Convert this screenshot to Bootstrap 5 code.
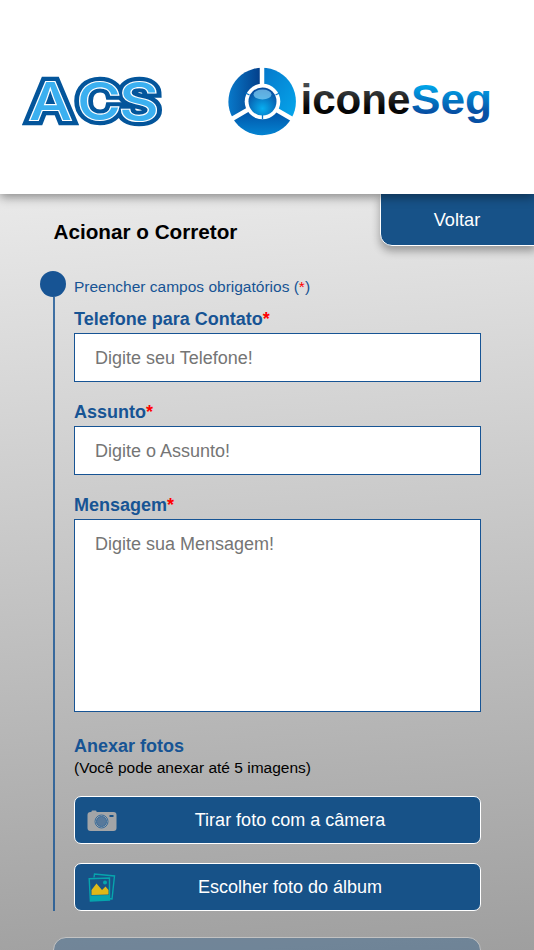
<!DOCTYPE html>
<html lang="pt-BR">
<head>
<meta charset="utf-8">
<meta name="viewport" content="width=device-width, initial-scale=1">
<title>Acionar o Corretor</title>
<link href="https://cdn.jsdelivr.net/npm/bootstrap@5.3.0/dist/css/bootstrap.min.css" rel="stylesheet">
<style>
html,body{height:950px;overflow:hidden}
body{font-family:"Liberation Sans",Arial,sans-serif;color:#000;background:linear-gradient(176deg,#e9e9e9 20%,#9f9f9f 100%)}
.brand-bar{height:194px;background:#fff;box-shadow:0 3px 10px rgba(0,0,0,.42);z-index:2}
.logo-acs{margin-left:20px;margin-top:70px}
.logo-seg{margin-left:56px;margin-top:62px;overflow:visible}
.title-row{height:77px;padding-left:53.5px}
.page-title{font-size:20.7px;font-weight:700;line-height:24px;margin:26px 0 0}
.back-btn{width:156px;height:53px;margin-top:-1px;margin-right:-2px;border:1.5px solid #fff;border-radius:0 0 0 12px;background:#175288;color:#fff;font-size:18.2px;box-shadow:0 5px 9px rgba(0,0,0,.33);padding:2px 2px 0 0}
.back-btn:hover{background:#175288;color:#fff}
.step-rail{width:26px;margin-left:40px;height:640px}
.step-dot{width:26px;height:26px;background:#175494}
.step-line{width:2px;margin-left:2px;background:#175494;opacity:.8}
.form-area{width:407px;margin-left:8px}
.hint{font-size:15.5px;line-height:18px;margin:7px 0 12px;color:#175494}
.field-label{font-size:18px;font-weight:700;line-height:22px;height:25px;color:#175494;margin:0;display:block}
.req{color:#f00}
.field-box{height:49px;border:1.5px solid #175494;font-size:18px;padding:1px 20px 0;line-height:24px;margin-bottom:19px;background:#fff}
.field-box::placeholder{color:#757575}
.field-box.tall{height:193px;padding-top:12px;resize:none;margin-bottom:23px;display:block}
.photo-note{font-size:15.5px;line-height:18px;margin:-1px 0 19px}
.photo-btn{height:48px;background:#175288;border:1.5px solid #fff;border-radius:7px;color:#fff;font-size:18px;margin-bottom:19px;padding:0 0 0 12px}
.photo-btn:hover{background:#175288;color:#fff;border-color:#fff}
.photo-btn .cap{padding-right:17px}
.send-btn{width:428px;height:52px;margin:7px 0 0 53px;border-radius:13px;background:#175288;border:1.5px solid #fff;opacity:.35!important}
.send-btn:disabled{background:#175288;border-color:#fff}
</style>
<script src="https://cdn.jsdelivr.net/npm/bootstrap@5.3.0/dist/js/bootstrap.bundle.min.js"></script>
</head>
<body>
<header class="brand-bar position-relative d-flex align-items-start">
  <svg class="logo-acs" width="150" height="62" viewBox="20 70 150 62" role="img" aria-label="ACS">
    <g stroke-linejoin="miter" stroke-miterlimit="3" font-family="Inter, sans-serif" font-weight="500" font-size="52">
      <g fill="#03559b" stroke="#03559b" stroke-width="10.5"><use href="#acs"/></g>
      <g fill="#fff" stroke="#fff" stroke-width="2.2"><use href="#acs"/></g>
      <g fill="#3bb0f0"><text id="acs" y="119.700"><tspan x="29" textLength="43" lengthAdjust="spacingAndGlyphs">A</tspan><tspan x="77" textLength="44" lengthAdjust="spacingAndGlyphs">C</tspan><tspan x="119" textLength="40" lengthAdjust="spacingAndGlyphs">S</tspan></text></g>
    </g>
  </svg>
  <svg class="logo-seg" width="270" height="80" viewBox="226 62 270 80" role="img" aria-label="iconeSeg">
    <defs>
      <linearGradient id="k" x1="0" y1="84" x2="0" y2="114" gradientUnits="userSpaceOnUse"><stop stop-color="#4a4e50"/><stop offset=".8" stop-color="#050505"/></linearGradient>
      <linearGradient id="b" x1="0" y1="83" x2="0" y2="122" gradientUnits="userSpaceOnUse"><stop stop-color="#00adf0"/><stop offset=".75" stop-color="#0650a4"/></linearGradient>
      <linearGradient id="d1" x1="0" y1="0" x2="1" y2="0"><stop stop-color="#0879ca"/><stop offset="1" stop-color="#033b86"/></linearGradient>
      <linearGradient id="d2" x1="0" y1="0" x2="1" y2="1"><stop stop-color="#0577ca"/><stop offset="1" stop-color="#05a7ec"/></linearGradient>
      <linearGradient id="d3" x1="0" y1="0" x2="0" y2="1"><stop stop-color="#003f96"/><stop offset="1" stop-color="#0484d2"/></linearGradient>
      <radialGradient id="orb" cx=".5" cy=".75" r=".7"><stop stop-color="#08aef0"/><stop offset="1" stop-color="#074da0"/></radialGradient>
    </defs>
    <path fill="url(#d1)" d="M262 101.500V67.700A33.900 33.900 0 0 0 232.900 118.500Z"/>
    <path fill="url(#d2)" d="M262 101.500V67.700A33.900 33.900 0 0 1 291.400 118.500Z"/>
    <path fill="url(#d3)" d="M262 101.500L232.900 118.500A33.900 33.900 0 0 0 291.400 118.500Z"/>
    <path d="M262 101.500V66M262 101.500L231 119.500M262 101.500L293 119.500" stroke="#fff" stroke-width="4.500"/>
    <circle cx="262.500" cy="101.500" r="17.800" fill="#fff"/>
    <circle cx="262.500" cy="101.500" r="14" fill="url(#orb)"/>
    <ellipse cx="262.500" cy="94.500" rx="9" ry="5" fill="#8fd9fb" opacity=".65"/>
    <path d="M262.500 115v4M249.500 95l-4-2M275.500 95l4-2" stroke="#0879ca" stroke-width="1.300"/>
    <g font-family="Liberation Sans, Arial, sans-serif" font-weight="700" font-size="42">
      <text x="300.500" y="113.700" fill="url(#k)" textLength="110" lengthAdjust="spacingAndGlyphs">icone</text>
      <text x="411" y="113.700" fill="url(#b)" textLength="81" lengthAdjust="spacingAndGlyphs">Seg</text>
    </g>
  </svg>
</header>

<div class="title-row d-flex justify-content-between align-items-start">
  <h1 class="page-title">Acionar o Corretor</h1>
  <button class="btn back-btn" type="button">Voltar</button>
</div>

<main class="d-flex">
  <div class="step-rail d-flex flex-column align-items-center flex-shrink-0">
    <span class="step-dot rounded-circle"></span>
    <span class="step-line flex-grow-1"></span>
  </div>
  <form class="form-area">
    <p class="hint">Preencher campos obrigatórios (<span class="req">*</span>)</p>
    <label class="field-label" for="tel">Telefone para Contato<span class="req">*</span></label>
    <input id="tel" type="tel" class="form-control rounded-0 field-box" placeholder="Digite seu Telefone!">
    <label class="field-label" for="subject">Assunto<span class="req">*</span></label>
    <input id="subject" type="text" class="form-control rounded-0 field-box" placeholder="Digite o Assunto!">
    <label class="field-label" for="msg">Mensagem<span class="req">*</span></label>
    <textarea id="msg" class="form-control rounded-0 field-box tall" placeholder="Digite sua Mensagem!"></textarea>
    <span class="field-label">Anexar fotos</span>
    <p class="photo-note">(Você pode anexar até 5 imagens)</p>
    <button type="button" class="btn photo-btn w-100 d-flex align-items-center">
      <svg width="30" height="24" viewBox="0 -1 30 24"><rect x=".5" y="3" width="29" height="19" rx="3" fill="#a3a5a7"/><rect x="4.500" y="1.500" width="5" height="3" rx="1" fill="#a3a5a7"/><circle cx="14.500" cy="12.500" r="6.500" fill="#a3a5a7" stroke="#396d9d" stroke-width="1"/><circle cx="14.500" cy="12.500" r="5" fill="#58799b" stroke="#396d9d"/><rect x="22.500" y="6" width="4" height="2" fill="#175288"/></svg>
      <span class="cap flex-grow-1 text-center">Tirar foto com a câmera</span>
    </button>
    <button type="button" class="btn photo-btn w-100 d-flex align-items-center">
      <svg width="30" height="30" viewBox="0 -1 30 30"><path d="M7 4.500L7.500 1 27.500 3 25 26 21 25.500" fill="none" stroke="#07a5ad" stroke-width="1.400"/><path d="M2.200 5.700L22.500 5V27L3.400 28Z" fill="#175288" stroke="#07a5ad" stroke-width="1.400"/><path d="M3 22.500L22.500 22V27L3.400 28Z" fill="#07a5ad"/><path d="M4.500 22V17L9.500 10.500 15 17 18.500 13.500 21.500 17V21.500Z" fill="#dfb817"/><circle cx="18" cy="9.500" r="2" fill="#07a5ad"/></svg>
      <span class="cap flex-grow-1 text-center">Escolher foto do álbum</span>
    </button>
  </form>
</main>
<button type="button" class="btn send-btn d-block" disabled aria-label="Enviar"></button>
</body>
</html>
